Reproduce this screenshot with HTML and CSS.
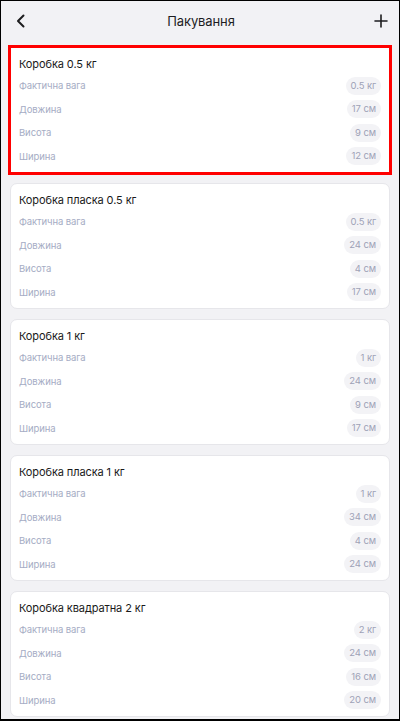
FILE: index.html
```html
<!DOCTYPE html>
<html lang="uk">
<head>
<meta charset="utf-8">
<title>Пакування</title>
<link rel="stylesheet" href="styles.css">
</head>
<body>
<div class="screen">
  <header class="topbar">
    <button class="icon-btn" aria-label="Назад">
      <svg width="10" height="14" viewBox="0 0 10 14"><path d="M7.5 1.5 L2 7 L7.5 12.5" fill="none" stroke="#1d1d1f" stroke-width="2" stroke-linecap="round" stroke-linejoin="round"/></svg>
    </button>
    <h1 class="title">Пакування</h1>
    <button class="icon-btn" aria-label="Додати">
      <svg width="14" height="14" viewBox="0 0 14 14"><path d="M7 1 V13 M1 7 H13" fill="none" stroke="#1d1d1f" stroke-width="1.6" stroke-linecap="round"/></svg>
    </button>
  </header>
  <main class="list">
    <section class="card selected">
      <h2 class="card-title">Коробка 0.5 кг</h2>
      <div class="row"><span class="label">Фактична вага</span><span class="pill">0.5 кг</span></div>
      <div class="row"><span class="label">Довжина</span><span class="pill">17 см</span></div>
      <div class="row"><span class="label">Висота</span><span class="pill">9 см</span></div>
      <div class="row"><span class="label">Ширина</span><span class="pill">12 см</span></div>
    </section>
    <section class="card">
      <h2 class="card-title">Коробка пласка 0.5 кг</h2>
      <div class="row"><span class="label">Фактична вага</span><span class="pill">0.5 кг</span></div>
      <div class="row"><span class="label">Довжина</span><span class="pill">24 см</span></div>
      <div class="row"><span class="label">Висота</span><span class="pill">4 см</span></div>
      <div class="row"><span class="label">Ширина</span><span class="pill">17 см</span></div>
    </section>
    <section class="card">
      <h2 class="card-title">Коробка 1 кг</h2>
      <div class="row"><span class="label">Фактична вага</span><span class="pill">1 кг</span></div>
      <div class="row"><span class="label">Довжина</span><span class="pill">24 см</span></div>
      <div class="row"><span class="label">Висота</span><span class="pill">9 см</span></div>
      <div class="row"><span class="label">Ширина</span><span class="pill">17 см</span></div>
    </section>
    <section class="card">
      <h2 class="card-title">Коробка пласка 1 кг</h2>
      <div class="row"><span class="label">Фактична вага</span><span class="pill">1 кг</span></div>
      <div class="row"><span class="label">Довжина</span><span class="pill">34 см</span></div>
      <div class="row"><span class="label">Висота</span><span class="pill">4 см</span></div>
      <div class="row"><span class="label">Ширина</span><span class="pill">24 см</span></div>
    </section>
    <section class="card">
      <h2 class="card-title">Коробка квадратна 2 кг</h2>
      <div class="row"><span class="label">Фактична вага</span><span class="pill">2 кг</span></div>
      <div class="row"><span class="label">Довжина</span><span class="pill">24 см</span></div>
      <div class="row"><span class="label">Висота</span><span class="pill">16 см</span></div>
      <div class="row"><span class="label">Ширина</span><span class="pill">20 см</span></div>
    </section>
  </main>
</div>
</body>
</html>
```

FILE: styles.css
```css
* { box-sizing: border-box; }
html, body { margin: 0; padding: 0; }
body {
  font-family: Inter, "Noto Sans", sans-serif;
  background: #000;
}
.screen {
  width: 400px;
  height: 721px;
  overflow: hidden;
  background: #f2f2f5;
  border: 1px solid #000;
  border-bottom-width: 2px;
}
.topbar {
  height: 40px;
  display: flex;
  align-items: center;
  justify-content: space-between;
  padding: 0 9px 0 11px;
}
.icon-btn {
  border: 0;
  background: none;
  padding: 0;
  width: 18px;
  height: 18px;
  display: flex;
  align-items: center;
  justify-content: center;
}
.title {
  margin: 0;
  font-size: 13px;
  font-weight: 400;
  letter-spacing: -0.1px;
  color: #1d1d1f;
}
.list {
  padding: 6px 9px 0 9px;
  display: flex;
  flex-direction: column;
  gap: 10px;
}
.card {
  background: #fff;
  border: 1px solid #e6e6ea;
  border-radius: 7px;
  padding: 7px 8px 4px 8px;
}
.card.selected {
  outline: 3px solid #ff0000;
  outline-offset: -1px;
  border-radius: 0;
}
.card-title {
  margin: 0;
  font-size: 11px;
  font-weight: 400;
  line-height: 19px;
  letter-spacing: -0.1px;
  color: #1a1a1a;
}
.row {
  height: 23.5px;
  display: flex;
  align-items: center;
  justify-content: space-between;
}
.label {
  font-size: 9.5px;
  letter-spacing: -0.1px;
  color: #a5acc4;
}
.pill {
  height: 18px;
  line-height: 18px;
  padding: 0 5px;
  border-radius: 9px;
  background: #f3f3f6;
  font-size: 9.5px;
  letter-spacing: -0.1px;
  color: #9ea2b6;
}
```
